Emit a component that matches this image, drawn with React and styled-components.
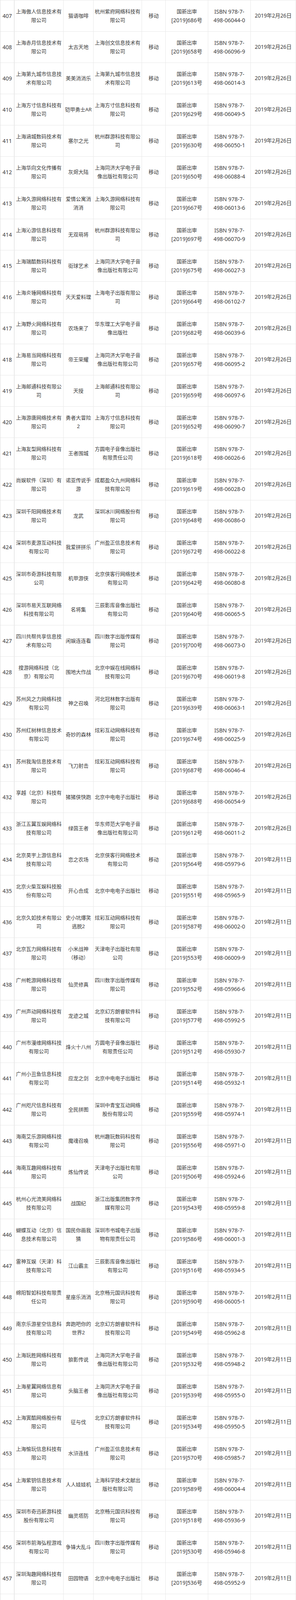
import React from 'react';
import styled, { createGlobalStyle } from 'styled-components';

const GlobalStyle = createGlobalStyle`
  html, body {
    margin: 0;
    padding: 0;
    background: #ffffff;
  }
  body {
    font-family: 'Noto Sans', 'Noto Sans CJK SC', sans-serif;
    color: #3a3a3a;
  }
`;

const D26 = '2019年2月26日';
const D11 = '2019年2月11日';
const D22 = '2019年1月22日';

// num | company | game | publisher | approval no. | isbn tail | date
const rows = [
  [407, '上海傲人信息技术有限公司', '猫语咖啡', '杭州紫府网络科技有限公司', 686, '06044-0', D26],
  [408, '上海赤月信息技术有限公司', '太古天地', '上海创文信息技术有限公司', 658, '06096-9', D26],
  [409, '上海第九城市信息技术有限公司', '美美消消乐', '上海第九城市信息技术有限公司', 613, '06014-3', D26],
  [410, '上海方寸信息科技有限公司', '铠甲勇士AR', '上海方寸信息科技有限公司', 629, '06049-5', D26],
  [411, '上海涵城数码技术有限公司', '塞尔之光', '杭州群游科技有限公司', 630, '06050-1', D26],
  [412, '上海华向文化传播有限公司', '灰烬大陆', '上海同济大学电子音像出版社有限公司', 650, '06088-4', D26],
  [413, '上海久游网络科技有限公司', '爱情公寓消消消', '上海久游网络科技有限公司', 667, '06013-6', D26],
  [414, '上海沁游信息科技有限公司', '无双萌将', '杭州群游科技有限公司', 697, '06070-9', D26],
  [415, '上海瑞酷数码科技有限公司', '街球艺术', '上海同济大学电子音像出版社有限公司', 675, '06027-3', D26],
  [416, '上海炎锤网络科技有限公司', '天天爱料理', '上海电子出版有限公司', 664, '06102-7', D26],
  [417, '上海野火网络科技有限公司', '农场来了', '华东理工大学电子音像出版社', 682, '06039-6', D26],
  [418, '上海易当网络科技有限公司', '帝王荣耀', '上海同济大学电子音像出版社有限公司', 657, '06095-2', D26],
  [419, '上海邮通科技有限公司', '天授', '上海邮通科技有限公司', 659, '06097-6', D26],
  [420, '上海游唐网络技术有限公司', '勇者大冒险2', '上海方寸信息科技有限公司', 652, '06090-7', D26],
  [421, '上海友型网络科技有限公司', '王者围城', '方圆电子音像出版社有限责任公司', 618, '06026-6', D26],
  [422, '尚娱软件（深圳）有限公司', '诺亚传说手游', '成都盈众九州网络科技有限公司', 619, '06028-0', D26],
  [423, '深圳千阳网络技术有限公司', '龙武', '深圳冰川网络股份有限公司', 648, '06086-0', D26],
  [424, '深圳市麦游互动科技有限公司', '我爱拼拼乐', '广州盈正信息技术有限公司', 672, '06022-8', D26],
  [425, '深圳市奇游科技有限公司', '机甲游侠', '北京侠客行网络技术有限公司', 642, '06080-8', D26],
  [426, '深圳市易天互联网络科技有限公司', '名将集', '三辰影库音像出版社有限公司', 640, '06065-5', D26],
  [427, '四川共帮共享信息技术有限公司', '闲娱连连看', '四川数字出版传媒有限公司', 700, '06073-0', D26],
  [428, '搜游网络科技（北京）有限公司', '围地大作战', '北京中娱在线网络科技有限公司', 670, '06019-8', D26],
  [429, '苏州风之力网络科技有限公司', '神之召唤', '河北冠林数字出版有限公司', 639, '06063-1', D26],
  [430, '苏州红树林信息技术有限公司', '奇妙的森林', '炫彩互动网络科技有限公司', 674, '06025-9', D26],
  [431, '苏州我淘信息技术有限公司', '飞刀射击', '炫彩互动网络科技有限公司', 687, '06046-4', D26],
  [432, '享越（北京）科技有限公司', '猪猪侠快跑', '北京中电电子出版社', 688, '06054-9', D26],
  [433, '浙江五翼互娱网络科技有限公司', '绿茵王者', '华东师范大学电子音像出版社有限公司', 612, '06011-2', D26],
  [434, '北京昊宇上游信息科技有限公司', '恋之农场', '北京侠客行网络技术有限公司', 564, '05979-6', D11],
  [435, '北京火柴互娱科技股份有限公司', '开心合成', '北京中电电子出版社', 551, '05965-9', D11],
  [436, '北京久如技术有限公司', '史小坑爆笑逃脱2', '炫彩互动网络科技有限公司', 587, '06002-0', D11],
  [437, '北京瓦力网络科技有限公司', '小米战神（移动）', '天津电子出版社有限公司', 553, '06009-9', D11],
  [438, '广州乾游网络科技有限公司', '仙灵修真', '四川数字出版传媒有限公司', 552, '05966-6', D11],
  [439, '广州声动网络科技有限公司', '龙迹之城', '北京幻方朗睿软件科技有限公司', 577, '05992-5', D11],
  [440, '广州市漫维网络科技有限公司', '烽火十八州', '方圆电子音像出版社有限责任公司', 512, '05930-7', D11],
  [441, '广州小丑鱼信息科技有限公司', '应龙之剑', '北京中电电子出版社', 514, '05932-1', D11],
  [442, '广州咫尺信息科技有限公司', '全民拼图', '深圳中青宝互动网络股份有限公司', 559, '05974-1', D11],
  [443, '海南艾乐游网络科技有限公司', '魔魂召唤', '杭州趣玩数码科技有限公司', 556, '05971-0', D11],
  [444, '海南互趣网络科技有限公司', '炼仙传说', '天津电子出版社有限公司', 506, '05924-6', D11],
  [445, '杭州心光流美网络科技有限公司', '战国纪', '浙江出版集团数字传媒有限公司', 543, '05959-8', D11],
  [446, '蝴蝶互动（北京）信息技术有限公司', '国民你画我猜', '深圳市书城电子出版物有限责任公司', 586, '06001-3', D11],
  [447, '雷神互娱（天津）科技有限公司', '江山霸主', '三辰影库音像出版社有限公司', 516, '05934-5', D11],
  [448, '绵阳智如科技有限责任公司', '星座乐消消', '北京畅元国讯科技有限公司', 590, '06005-1', D11],
  [449, '南京乐游星空信息科技有限公司', '奔跑吧你的世界2', '北京幻方朗睿软件科技有限公司', 549, '05962-8', D11],
  [450, '上海玩胜网络科技有限公司', '狼影传说', '上海同济大学电子音像出版社有限公司', 532, '05948-2', D11],
  [451, '上海星翼网络信息有限公司', '头脑王者', '上海同济大学电子音像出版社有限公司', 539, '05955-0', D11],
  [452, '上海寅酷网络股份有限公司', '征与伐', '北京幻方朗睿软件科技有限公司', 534, '05950-5', D11],
  [453, '上海愉玩信息科技有限公司', '水浒连线', '广州盈正信息技术有限公司', 570, '05985-7', D11],
  [454, '上海紫钥信息技术有限公司', '人人娃娃机', '上海科学技术文献出版社有限公司', 589, '06004-4', D11],
  [455, '深圳市奇迅新游科技股份有限公司', '幽灵塔防', '北京畅元国讯科技有限公司', 518, '05936-9', D11],
  [456, '深圳市前海弘程游戏有限公司', '争锋大乱斗', '四川数字出版传媒有限公司', 530, '05946-8', D11],
  [457, '深圳淘趣网络科技有限公司', '田园物语', '北京中电电子出版社', 536, '05952-9', D11],
  [458, '深圳腾蛇网络科技有限公司', '点点富翁', '方圆电子音像出版社有限责任公司', 546, '05960-4', D11],
  [459, '苏州竹语网络科技有限公司', '大头儿子小小家园', '北京幻方朗睿软件科技有限公司', 511, '05929-1', D11],
  [460, '天天电竞（北京）网络科技有限公司', '电竞娃娃机', '大唐网络有限公司', 588, '06003-7', D11],
  [461, '武汉狙击手网络科技有限公司', '诸侯点将录', '杭州趣玩数码科技有限公司', 510, '05928-4', D11],
  [462, '西安蝴蝶网络科技有限公司', '电竞台球', '陕西三秦出版社有限责任公司', 580, '05995-6', D11],
  [463, '浙江一聚会科技有限公司', '酷跑派对', '杭州紫府网络科技有限公司', 571, '05986-4', D11],
  [464, '北京北纬通信科技股份有限公司', '天使之吻', '天津电子出版社有限公司', 276, '05902-4', D22],
  [465, '北京乐享欣动科技有限公司', '代号斩', '河北冠林数字出版有限公司', 306, '05918-5', D22],
  [466, '北京赞成科技发展有限公司', '海洋大亨', '北京中电电子出版社', 345, '05875-1', D22],
  [467, '成都萤火虫信息技术有限公司', '路人超能100', '艾格拉斯科技（北京）有限公司', 308, '05838-6', D22],
  [468, '成都掌沃无限科技有限公司', '冰火霜天', '成都电子科大出版社有限责任公司', 316, '05846-1', D22],
  [469, '淮安有米信息科技有限公司', '无侠', '成都盈众九州网络科技有限公司', 259, '05885-0', D22],
  [470, '龙唐盛世（北京）网络技术有限公司', '千年血战', '成都盈众九州网络科技有限公司', 292, '05917-8', D22],
  [471, '上海参宿信息科技有限公司', '异次元大作战', '广西金海湾电子音像出版社有限公司', 294, '05825-6', D22],
  [472, '上海大承网络技术有限公司', '梦幻航海录', '上海大承网络技术有限公司', 323, '05853-9', D22],
  [473, '上海幻踌网络科技有限公司', '银色觉醒', '北京伯通电子出版社', 270, '05896-6', D22],
  [474, '上海皇石网络科技有限公司', '儿童益智泡泡龙', '河北冠林数字出版有限公司', 348, '05878-2', D22],
  [475, '上海极贝网络科技有限公司', '口袋梦幻精灵', '上海同济大学电子音像出版社有限公司', 332, '05862-1', D22],
  [476, '上海九艺网络科技有限公司', '破晓战歌', '杭州群游科技有限公司', 320, '05850-8', D22],
  [477, '上海领音文化传播有限公司', '钢琴师', '华东师范大学电子音像出版社有限公司', 324, '05854-6', D22],
  [478, '上海似锦网络科技有限公司', '卧底画师', '方圆电子音像出版社有限责任公司', 284, '05909-3', D22],
  [479, '上海指战网络科技有限公司', '阿拉德之怒：盟约', '华东师范大学电子音像出版社有限公司', 273, '05899-7', D22],
  [480, '绍兴天石网络科技有限公司', '废土行动', '浙江出版集团数字传媒有限公司', 331, '05861-4', D22],
  [481, '深圳风月科技有限公司', '末日残响', '北京伯通电子出版社', 310, '05840-9', D22],
  [482, '深圳泡椒思志信息技术有限公司', '斗剑仙', '成都盈众九州网络科技有限公司', 334, '05864-5', D22],
  [483, '深圳市天睿臻游科技有限公司', '冒险者集结', '杭州润趣科技有限公司', 311, '05841-6', D22],
  [484, '深圳市迅龙创威网络技术有限公司', '生死行动', '北京幻方朗睿软件科技有限公司', 342, '05872-0', D22],
  [485, '深圳淘乐网络科技有限公司', '新桃花源记', '上海同济大学电子音像出版社有限公司', 268, '05894-2', D22],
  [486, '石家庄炫酷软件科技有限公司', '鬼吹灯之牧野诡事H5', '方圆电子音像出版社有限责任公司', 269, '05895-9', D22],
];

const Sheet = styled.div`
  display: grid;
  grid-auto-rows: 80px;
  width: 759px;
  border-top: 1px solid #e8e8e8;
  border-left: 1px solid #dcdcdc;
  box-sizing: border-box;
`;

const Row = styled.div`
  display: grid;
  grid-template-columns: 36px 126px 77px 124px 61px 109px 109px 116px;
  box-sizing: border-box;
  border-bottom: 1px solid #e8e8e8;
`;

const Cell = styled.div`
  display: flex;
  flex-direction: column;
  align-items: center;
  justify-content: center;
  min-width: 0;
  box-sizing: border-box;
  padding: 0 ${(p) => p.$pad ?? 3}px;
  border-right: 1px solid ${(p) => (p.$strong ? '#d4d4d4' : '#e8e8e8')};
  font-size: ${(p) => p.$size ?? 13}px;
  line-height: 21.5px;
  text-align: center;
`;

const Line = styled.span`
  display: block;
  white-space: nowrap;
  font-size: ${(p) => p.$size ?? 13}px;
`;

function TableRow({ data }) {
  const [num, company, game, publisher, approval, isbn, date] = data;
  return (
    <Row>
      <Cell $size={14} $pad={0} $strong>{num}</Cell>
      <Cell>{company}</Cell>
      <Cell $pad={2}>{game}</Cell>
      <Cell>{publisher}</Cell>
      <Cell>移动</Cell>
      <Cell>
        <Line>国新出审</Line>
        <Line $size={14}>[2019]{approval}号</Line>
      </Cell>
      <Cell>
        <Line $size={14}>ISBN 978-7-</Line>
        <Line $size={14}>498-{isbn}</Line>
      </Cell>
      <Cell $size={13.5}>{date}</Cell>
    </Row>
  );
}

export default function App() {
  return (
    <>
      <GlobalStyle />
      <Sheet>
        {rows.map((r) => (
          <TableRow key={r[0]} data={r} />
        ))}
      </Sheet>
    </>
  );
}
